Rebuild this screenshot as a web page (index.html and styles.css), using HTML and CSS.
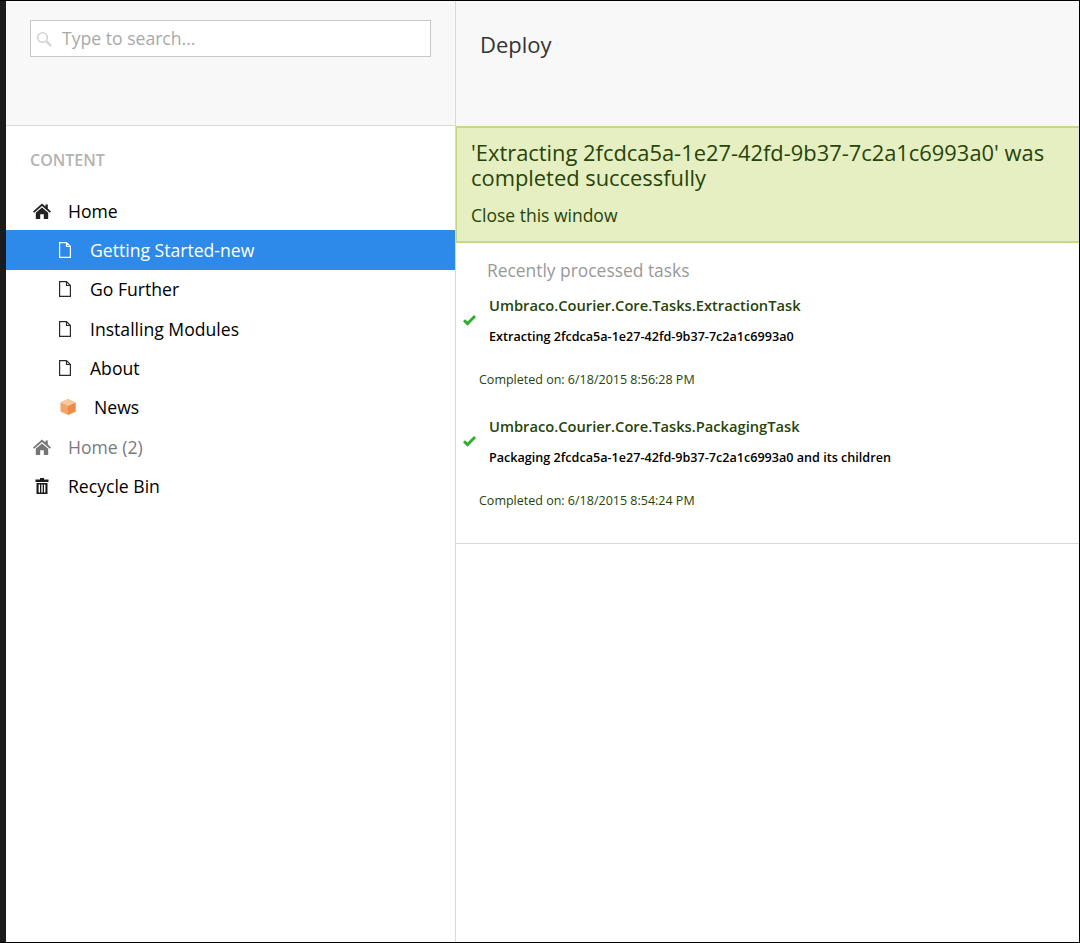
FILE: index.html
```html
<!DOCTYPE html>
<html lang="en">
<head>
    <meta charset="UTF-8">
    <meta name="viewport" content="width=device-width, initial-scale=1.0">
    <title>Deploy</title>
    <link rel="stylesheet" href="styles.css">
</head>
<body>
    <svg class="sprites" width="0" height="0">
        <symbol id="home" viewBox="0 0 18 16">
            <path d="M9 0.5 L12.5 3.6 V1.5 H14.8 V5.6 L18 8.4 L16.8 9.7 L9 2.9 L1.2 9.7 L0 8.4 Z"/>
            <path d="M9 4.4 L15.2 9.8 V16 H10.8 V11.2 H7.2 V16 H2.8 V9.8 Z"/>
        </symbol>
        <symbol id="doc" viewBox="0 0 12 16">
            <path d="M0.6 0.6 H7.5 L11.4 4.5 V15.4 H0.6 Z M7.5 0.6 V4.5 H11.4" fill="none" stroke="currentColor" stroke-width="1.2"/>
        </symbol>
        <symbol id="tick" viewBox="0 0 13 11">
            <path d="M0 6.2 L2 4.2 L4.5 6.6 L11 0 L13 2 L4.5 10.8 Z"/>
        </symbol>
    </svg>

    <div id="page">
        <div class="strip"></div>

        <div id="sidebar">
            <div class="side-head">
                <div class="search">
                    <svg class="search-icon" viewBox="0 0 16 16" width="16" height="16">
                        <circle cx="6.5" cy="6.5" r="4.8" fill="none" stroke="#d4d4d4" stroke-width="1.6"/>
                        <path d="M10.2 10.2 L15 15" stroke="#d4d4d4" stroke-width="2.4"/>
                    </svg>
                    <input class="search-input" type="text" placeholder="Type to search...">
                </div>
            </div>
            <div class="side-body">
                <h5 class="tree-title">CONTENT</h5>
                <ul class="tree">
                    <li class="row">
                        <svg class="ico-home"><use href="#home"/></svg>
                        <span>Home</span>
                    </li>
                    <li class="row child active">
                        <svg class="ico-doc"><use href="#doc"/></svg>
                        <span>Getting Started-new</span>
                    </li>
                    <li class="row child">
                        <svg class="ico-doc"><use href="#doc"/></svg>
                        <span>Go Further</span>
                    </li>
                    <li class="row child">
                        <svg class="ico-doc"><use href="#doc"/></svg>
                        <span>Installing Modules</span>
                    </li>
                    <li class="row child">
                        <svg class="ico-doc"><use href="#doc"/></svg>
                        <span>About</span>
                    </li>
                    <li class="row child">
                        <svg class="ico-box" viewBox="0 0 18 18">
                            <path d="M9 1 L16.5 4.5 V13.5 L9 17 L1.5 13.5 V4.5 Z" fill="#f3a468"/>
                            <path d="M9 8 L16.5 4.5 V13.5 L9 17 Z" fill="#f08a45"/>
                            <path d="M9 1 L16.5 4.5 L9 8 L1.5 4.5 Z" fill="#f8c9a0"/>
                        </svg>
                        <span class="news">News</span>
                    </li>
                    <li class="row muted">
                        <svg class="ico-home"><use href="#home"/></svg>
                        <span>Home (2)</span>
                    </li>
                    <li class="row">
                        <svg class="ico-trash" viewBox="0 0 14 16">
                            <path d="M5 0 H9 V1.5 H13.5 V4 H0.5 V1.5 H5 Z"/>
                            <path d="M1.5 5 H12.5 V16 H1.5 Z M3.6 6.5 V14.5 H5 V6.5 Z M6.3 6.5 V14.5 H7.7 V6.5 Z M9 6.5 V14.5 H10.4 V6.5 Z" fill-rule="evenodd"/>
                        </svg>
                        <span>Recycle Bin</span>
                    </li>
                </ul>
            </div>
        </div>

        <div id="main">
            <div class="main-head">
                <h1>Deploy</h1>
            </div>
            <div class="success">
                <p class="success-msg">'Extracting 2fcdca5a-1e27-42fd-9b37-7c2a1c6993a0' was completed successfully</p>
                <a class="success-close">Close this window</a>
            </div>
            <div class="tasks">
                <h4>Recently processed tasks</h4>
                <div class="task">
                    <div class="task-top">
                        <svg class="check"><use href="#tick"/></svg>
                        <div>
                            <div class="task-name">Umbraco.Courier.Core.Tasks.ExtractionTask</div>
                            <div class="task-desc">Extracting 2fcdca5a-1e27-42fd-9b37-7c2a1c6993a0</div>
                        </div>
                    </div>
                    <div class="task-date">Completed on: 6/18/2015 8:56:28 PM</div>
                </div>
                <div class="task">
                    <div class="task-top">
                        <svg class="check"><use href="#tick"/></svg>
                        <div>
                            <div class="task-name">Umbraco.Courier.Core.Tasks.PackagingTask</div>
                            <div class="task-desc">Packaging 2fcdca5a-1e27-42fd-9b37-7c2a1c6993a0 and its children</div>
                        </div>
                    </div>
                    <div class="task-date">Completed on: 6/18/2015 8:54:24 PM</div>
                </div>
            </div>
        </div>
    </div>
</body>
</html>
```

FILE: styles.css
```css
* {
    box-sizing: border-box;
}

html, body {
    height: 100%;
}

body {
    margin: 0;
    font-family: "Open Sans", sans-serif;
    background: #fff;
    color: #000;
    overflow: hidden;
}

.sprites {
    display: block;
    height: 0;
}

#page {
    display: flex;
    height: 943px;
    border: 1px solid #000;
    border-left: none;
}

.strip {
    width: 6px;
    background: #1b1b1d;
}

#sidebar {
    width: 450px;
    border-right: 1px solid #d9d9d9;
}

.side-head {
    height: 125px;
    padding: 19px 24px 0;
    background: #f8f8f8;
    border-bottom: 1px solid #d9d9d9;
}

.search {
    display: flex;
    align-items: center;
    width: 401px;
    height: 37px;
    background: #fff;
    border: 1px solid #c9c9c9;
}

.search-icon {
    margin-left: 5px;
    flex: none;
}

.search-input {
    flex: 1;
    min-width: 0;
    height: 100%;
    padding: 0 0 2px 10px;
    border: none;
    outline: none;
    background: none;
    font: 17.6px "Open Sans", sans-serif;
}

.search-input::placeholder {
    color: #a9a9a9;
    opacity: 1;
}

.tree-title {
    margin: 24px 0 0 24px;
    font-size: 16px;
    line-height: 20px;
    font-weight: 600;
    color: #b3b3b3;
}

.tree {
    list-style: none;
    margin: 21px 0 0;
    padding: 0;
}

.row {
    display: flex;
    align-items: center;
    height: 39.35px;
    padding-left: 27px;
    font-size: 17.6px;
}

.row span {
    margin-left: 17px;
}

.child {
    padding-left: 53px;
}

.child span {
    margin-left: 19px;
}

.child .news {
    margin-left: 17px;
}

.active {
    background: #2e8aea;
    color: #fff;
}

.muted {
    color: #7a7a80;
}

.ico-home {
    width: 18px;
    height: 16px;
    fill: #222;
}

.muted .ico-home {
    fill: #767676;
}

.ico-doc {
    width: 12px;
    height: 16px;
    color: #2a2a2a;
}

.active .ico-doc {
    color: #fff;
}

.ico-box {
    width: 18px;
    height: 18px;
    filter: blur(0.5px);
}

.ico-trash {
    width: 14px;
    height: 16px;
    margin: 0 2px;
    fill: #1a1a1a;
}

#main {
    flex: 1;
    min-width: 0;
}

.main-head {
    height: 125px;
    padding: 26px 0 0 24px;
    background: #f8f8f8;
}

.main-head h1 {
    margin: 0;
    font-size: 22px;
    line-height: 34px;
    font-weight: 400;
    color: #333;
}

.success {
    height: 117px;
    padding: 12px 14px 0;
    background: #e6efc2;
    border: 2px solid #c6d880;
    border-right: none;
    border-left-width: 1px;
    color: #264409;
}

.success-msg {
    margin: 0;
    font-size: 21.88px;
    line-height: 25px;
}

.success-close {
    display: block;
    margin-top: 13px;
    font-size: 17.5px;
    line-height: 24px;
}

.tasks {
    height: 301px;
    padding-top: 15px;
    border-bottom: 1px solid #d9d9d9;
}

.tasks h4 {
    margin: 0 0 0 31px;
    font-size: 17.4px;
    line-height: 24px;
    font-weight: 400;
    color: #999;
}

.task {
    height: 121px;
}

.task-top {
    display: flex;
    align-items: center;
    padding: 12px 0 0 7px;
}

.check {
    width: 13px;
    height: 11px;
    margin-right: 13px;
    fill: #2cb02c;
    flex: none;
}

.task-name {
    font-size: 14.7px;
    line-height: 22px;
    font-weight: 600;
    color: #264409;
}

.task-desc {
    margin-top: 11px;
    font-size: 12.6px;
    line-height: 20px;
    font-weight: 600;
}

.task-date {
    margin: 23px 0 0 23px;
    font-size: 12.5px;
    line-height: 20px;
    color: #264409;
}
```
